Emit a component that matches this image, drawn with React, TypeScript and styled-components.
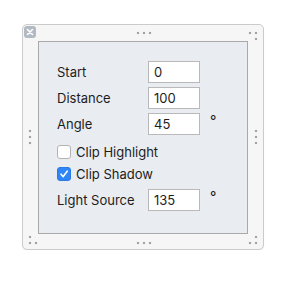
import styled, { createGlobalStyle } from "styled-components";

const GlobalStyle = createGlobalStyle`
  html, body {
    margin: 0;
    padding: 0;
    background: #ffffff;
  }
  body {
    font-family: Inter, "Liberation Sans", Arial, sans-serif;
    font-size: 13px;
    color: #1d1d1d;
  }
`

const Page = styled.div`
    padding: 24px 0 0 22px;
`

const Frame = styled.div`
    position: relative;
    box-sizing: border-box;
    width: 242px;
    height: 226px;
    padding: 16px 15px;
    background: #f6f6f6;
    border: 1px solid #cbcbcb;
    border-radius: 5px;
    box-shadow: 0 1px 1px rgba(0, 0, 0, 0.06);
`

const Panel = styled.div`
    box-sizing: border-box;
    width: 210px;
    height: 193px;
    padding: 19px 0 0 18px;
    background: #e9ecf0;
    border: 1px solid #a9a9a9;
    display: flex;
    flex-direction: column;
`

const Row = styled.div<{ $top?: number }>`
    display: flex;
    align-items: center;
    height: 22px;
    margin-top: ${p => p.$top ?? 0}px;
`

const Label = styled.span`
    width: 91px;
    flex: none;
`

const Field = styled.div`
    box-sizing: border-box;
    width: 52px;
    height: 22px;
    padding: 0 5px;
    background: #fff;
    border: 1px solid #b9b9b9;
    display: flex;
    align-items: center;
`

const Degree = styled.span`
    margin: 2px 0 0 10px;
    align-self: flex-start;
    line-height: 12px;
    font-size: 14px;
`

const CheckRow = styled.div<{ $top?: number }>`
    display: flex;
    align-items: center;
    height: 22px;
    margin-top: ${p => p.$top ?? 0}px;
    gap: 5px;
`

const Box = styled.span<{ $on?: boolean }>`
    box-sizing: border-box;
    width: 14px;
    height: 14px;
    border-radius: 3px;
    background: ${p => (p.$on ? "#2f86f6" : "#fff")};
    border: 1px solid ${p => (p.$on ? "#2a7ae6" : "#b3b3b3")};
    display: flex;
    align-items: center;
    justify-content: center;
`

const Dot = styled.span`
    position: absolute;
    width: 2px;
    height: 2px;
    background: #a3a3a3;
    box-shadow: 0 0 1px rgba(0, 0, 0, 0.25);
`

const Close = styled.span`
    position: absolute;
    left: 1px;
    top: 1px;
    width: 12px;
    height: 12px;
    border-radius: 3px;
    background: #b3b9c2;
    display: flex;
    align-items: center;
    justify-content: center;
`

// dot coordinates, relative to the frame's padding box
const dots: [number, number][] = [
    [114, 7], [120, 7], [126, 7],
    [114, 217], [120, 217], [126, 217],
    [6, 105], [6, 111], [6, 117],
    [232, 105], [232, 111], [232, 117],
    [226, 7], [232, 7], [232, 13],
    [6, 211], [6, 217], [12, 217],
    [232, 211], [226, 217], [232, 217],
]

const Num = ({ label, value, degree }: { label: string; value: string; degree?: boolean }) => (
    <>
        <Label>{label}</Label>
        <Field>{value}</Field>
        {degree && <Degree>°</Degree>}
    </>
)

const App = () => {
    return (
        <Page>
            <GlobalStyle />
            <Frame>
                <Close>
                    <svg width="8" height="8" viewBox="0 0 8 8">
                        <path d="M1.5 1.5 L6.5 6.5 M6.5 1.5 L1.5 6.5" stroke="#fff" strokeWidth="1.6" strokeLinecap="round" />
                    </svg>
                </Close>
                {dots.map(([x, y], i) => (
                    <Dot key={i} style={{ left: x, top: y }} />
                ))}
                <Panel>
                    <Row><Num label="Start" value="0" /></Row>
                    <Row $top={4}><Num label="Distance" value="100" /></Row>
                    <Row $top={4}><Num label="Angle" value="45" degree /></Row>
                    <CheckRow $top={6}>
                        <Box />
                        Clip Highlight
                    </CheckRow>
                    <CheckRow>
                        <Box $on>
                            <svg width="10" height="10" viewBox="0 0 10 10">
                                <path d="M2 5.2 L4.2 7.6 L8.2 2.2" stroke="#fff" strokeWidth="1.6" fill="none" strokeLinecap="round" strokeLinejoin="round" />
                            </svg>
                        </Box>
                        Clip Shadow
                    </CheckRow>
                    <Row $top={4}><Num label="Light Source" value="135" degree /></Row>
                </Panel>
            </Frame>
        </Page>
    )
}

export default App;
